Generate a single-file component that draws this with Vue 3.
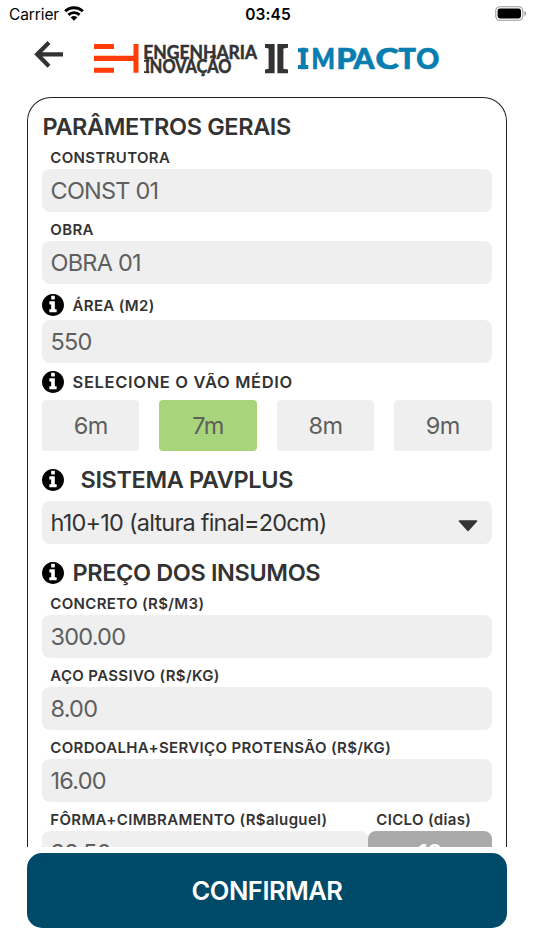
<script setup>
const infoPath =
  'M1024 1248v-160q0-14-9-23t-23-9h-96v-512q0-14-9-23t-23-9h-320q-14 0-23 9t-9 23v160q0 14 9 23t23 9h96v320h-96q-14 0-23 9t-9 23v160q0 14 9 23t23 9h448q14 0 23-9t9-23zm-128-896v-192q0-14-9-23t-23-9h-192q-14 0-23 9t-9 23v192q0 14 9 23t23 9h192q14 0 23-9t9-23zm640 416q0 209-103 385.5t-279.5 279.5-385.5 103-385.5-103-279.5-279.5-103-385.5 103-385.5 279.5-279.5 385.5-103 385.5 103 279.5 279.5 103 385.5z'
const spans = ['6m', '7m', '8m', '9m']
const selected = '7m'
const brand = [
  { c: 'I', x: 299.1, w: 8.2 },
  { c: 'M', x: 311.6, w: 23.4 },
  { c: 'P', x: 336.2, w: 20.2 },
  { c: 'A', x: 353.5, w: 21 },
  { c: 'C', x: 375.4, w: 23.2 },
  { c: 'T', x: 398.6, w: 17.4 },
  { c: 'O', x: 416.2, w: 23 }
]
const prices = [
  { label: 'CONCRETO (R$/M3)', value: '300.00' },
  { label: 'AÇO PASSIVO (R$/KG)', value: '8.00' },
  { label: 'CORDOALHA+SERVIÇO PROTENSÃO (R$/KG)', value: '16.00' }
]
</script>

<template>
  <div class="screen">
    <div class="status">
      <div class="carrier">
        <span>Carrier</span>
        <svg width="20" height="15" viewBox="0 0 20 15">
          <g fill="none" stroke="#000" stroke-width="2.9">
            <path d="M1.2 5.3A12.6 12.6 0 0 1 18.8 5.3" />
            <path d="M4.4 8.9A8 8 0 0 1 15.6 8.9" />
          </g>
          <path d="M10 14.8L6.7 11.5A4.6 4.6 0 0 1 13.3 11.5Z" />
        </svg>
      </div>
      <span class="clock">03:45</span>
      <div class="power">
        <svg width="32" height="16" viewBox="0 0 32 16">
          <rect x=".8" y=".8" width="27" height="13.4" rx="4" fill="none" stroke="#999" stroke-width="1.1" />
          <rect x="2.6" y="2.6" width="23.4" height="9.8" rx="2.3" />
          <path d="M29.4 5v5q1.8-.8 1.8-2.5t-1.8-2.5z" fill="#999" />
        </svg>
      </div>
    </div>

    <header class="header">
      <svg class="back" width="30" height="28" viewBox="0 0 30 28">
        <path d="M29 14.3H4M15 2.4L3.2 14.3L15 26.2" fill="none" stroke="#333" stroke-width="4.2" />
      </svg>
      <svg class="logo" width="348" height="36" viewBox="92 41 348 36">
        <path d="M94 44h20v5H94zM94 55.7h39.5V44h5v28.7h-5V61H94zM94 67.7h20v5H94z" fill="#ff3b06" />
        <g fill="#333" stroke="#333" stroke-width=".5" font-family="Lato, sans-serif" font-weight="700">
          <text x="143.2" y="58.6" font-size="18.2" textLength="114" lengthAdjust="spacingAndGlyphs">ENGENHARIA</text>
          <text x="145" y="72.8" font-size="18" textLength="86.5" lengthAdjust="spacingAndGlyphs">INOVAÇÃO</text>
        </g>
        <path d="M144 59.9h5.4v1.8H144zM144 71.2h5.4v1.8H144z" fill="#333" />
        <path d="M265 44h9.6v29.3H265v-3.8l3.6-.8V48.6l-3.6-.8zM288 44h-10.6v29.3H288v-3.8l-4.6-.8V48.6l4.6-.8z" fill="#333" />
        <path d="M298 48.2h10.3v4H298zM298 65h10.3v4H298z" fill="#087db0" />
        <text y="68.6" font-family="Lato, sans-serif" font-weight="900" font-size="27.6" fill="#087db0" stroke="#087db0" stroke-width=".7"><tspan v-for="l in brand" :key="l.c" :x="l.x" :textLength="l.w" lengthAdjust="spacingAndGlyphs">{{ l.c }}</tspan></text>
      </svg>
    </header>

    <main class="panel">
      <h2 class="title first">PARÂMETROS GERAIS</h2>
      <label class="label">CONSTRUTORA</label>
      <div class="field">CONST 01</div>
      <label class="label">OBRA</label>
      <div class="field">OBRA 01</div>
      <div class="info-row area">
        <svg class="info" viewBox="0 0 1536 1536"><path :d="infoPath" /></svg>
        <span class="area-text">ÁREA (M2)</span>
      </div>
      <div class="field last">550</div>
      <div class="info-row span">
        <svg class="info" viewBox="0 0 1536 1536"><path :d="infoPath" /></svg>
        <span class="span-text">SELECIONE O VÃO MÉDIO</span>
      </div>
      <div class="chips">
        <div v-for="s in spans" :key="s" class="chip" :class="{ on: s === selected }">{{ s }}</div>
      </div>
      <div class="info-row system">
        <svg class="info" viewBox="0 0 1536 1536"><path :d="infoPath" /></svg>
        <h2 class="title indent">SISTEMA PAVPLUS</h2>
      </div>
      <div class="field select">
        <span>h10+10 (altura final=20cm)</span>
        <svg width="20" height="12" viewBox="0 0 20 12">
          <path d="M1.4 1H18.6L10 10.6Z" fill="#333" stroke="#333" stroke-width="1.4" stroke-linejoin="round" />
        </svg>
      </div>
      <div class="info-row supplies">
        <svg class="info" viewBox="0 0 1536 1536"><path :d="infoPath" /></svg>
        <h2 class="title insumos">PREÇO DOS INSUMOS</h2>
      </div>
      <template v-for="p in prices" :key="p.label">
        <label class="label">{{ p.label }}</label>
        <div class="field">{{ p.value }}</div>
      </template>
      <div class="split">
        <div class="left">
          <label class="label form">FÔRMA+CIMBRAMENTO (R$aluguel)</label>
          <div class="field">38.50</div>
        </div>
        <div class="right">
          <label class="label cycle">CICLO (dias)</label>
          <div class="field days">10</div>
        </div>
      </div>
    </main>

    <button class="confirm">CONFIRMAR</button>
  </div>
</template>

<style>
body {
  margin: 0;
  background: #fff;
}
</style>

<style scoped>
.screen {
  width: 534px;
  height: 950px;
  box-sizing: border-box;
  display: flex;
  flex-direction: column;
  overflow: hidden;
  background: #fff;
  color: #333;
  font-family: Inter, "Liberation Sans", sans-serif;
}
.status {
  display: grid;
  grid-template-columns: 1fr auto 1fr;
  align-items: center;
  height: 27px;
  box-sizing: border-box;
  padding: 1px 7px 0 9px;
  color: #000;
  font-size: 15.5px;
}
.carrier {
  display: flex;
  align-items: center;
  gap: 5px;
  letter-spacing: -0.1px;
}
.carrier svg {
  margin-top: -2px;
}
.clock {
  font-weight: 600;
  letter-spacing: 0.1px;
}
.power {
  display: flex;
  justify-content: flex-end;
}
.power svg {
  margin-top: -1px;
}
.header {
  display: flex;
  height: 70px;
  padding-left: 34px;
  align-items: flex-start;
}
.back {
  margin-top: 13px;
}
.logo {
  margin: 14px 0 0 28px;
}
.panel {
  height: 750px;
  flex: none;
  box-sizing: border-box;
  margin: 0 27px;
  padding: 10px 14.5px 0 14px;
  border: 1px solid #222;
  border-bottom: 0;
  border-radius: 24px 24px 0 0;
  overflow: hidden;
}
.title {
  margin: 0;
  font-size: 23.5px;
  line-height: 38px;
  font-weight: 600;
  letter-spacing: -0.38px;
  white-space: nowrap;
}
.title.first {
  padding-left: 0.5px;
}
.label {
  display: block;
  height: 23px;
  padding-left: 8.3px;
  font-size: 15px;
  line-height: 23px;
  font-weight: 600;
  letter-spacing: 0.34px;
  white-space: nowrap;
}
.field {
  height: 43px;
  box-sizing: border-box;
  margin-bottom: 6px;
  padding-left: 8.5px;
  border-radius: 8px;
  background: #efefef;
  color: #5f5f5f;
  font-size: 23.5px;
  line-height: 44px;
  font-weight: 400;
  letter-spacing: -0.78px;
  white-space: nowrap;
}
.field.last {
  margin-bottom: 0;
}
.info-row {
  display: flex;
  align-items: center;
}
.info {
  width: 22px;
  height: 22px;
  flex: none;
}
.info-row span {
  margin-left: 8.5px;
  font-weight: 600;
  white-space: nowrap;
}
.area {
  height: 30px;
}
.area-text {
  font-size: 15px;
  letter-spacing: 0.35px;
}
.span {
  height: 37px;
}
.span-text {
  font-size: 16.5px;
  letter-spacing: 0.67px;
}
.chips {
  display: grid;
  grid-template-columns: repeat(4, 1fr);
  gap: 20px;
}
.chip {
  height: 51px;
  border-radius: 4px;
  background: #efefef;
  color: #5f5f5f;
  font-size: 23.5px;
  line-height: 52px;
  font-weight: 400;
  letter-spacing: -0.6px;
  text-align: center;
}
.chip.on {
  background: #a8d47b;
}
.system {
  height: 42px;
  padding-top: 8px;
}
.indent {
  margin-left: 16.5px;
}
.select {
  display: flex;
  justify-content: space-between;
  align-items: center;
  padding-right: 14px;
  margin-bottom: 9px;
  color: #333;
}
.select svg {
  margin-top: 6px;
}
.supplies {
  height: 39px;
}
.insumos {
  margin-left: 8.5px;
}
.split {
  display: flex;
}
.left {
  width: 326px;
}
.right {
  flex: 1;
}
.field.days {
  padding: 0;
  background: #aaa;
  color: #fff;
  font-weight: 600;
  text-align: center;
}
.confirm {
  height: 75px;
  flex: none;
  margin: 6px 27px 0;
  padding: 0;
  border: 0;
  border-radius: 15px;
  background: #004a69;
  color: #fff;
  font: 600 25.5px/75px Inter, "Liberation Sans", sans-serif;
  letter-spacing: -0.45px;
}
</style>
